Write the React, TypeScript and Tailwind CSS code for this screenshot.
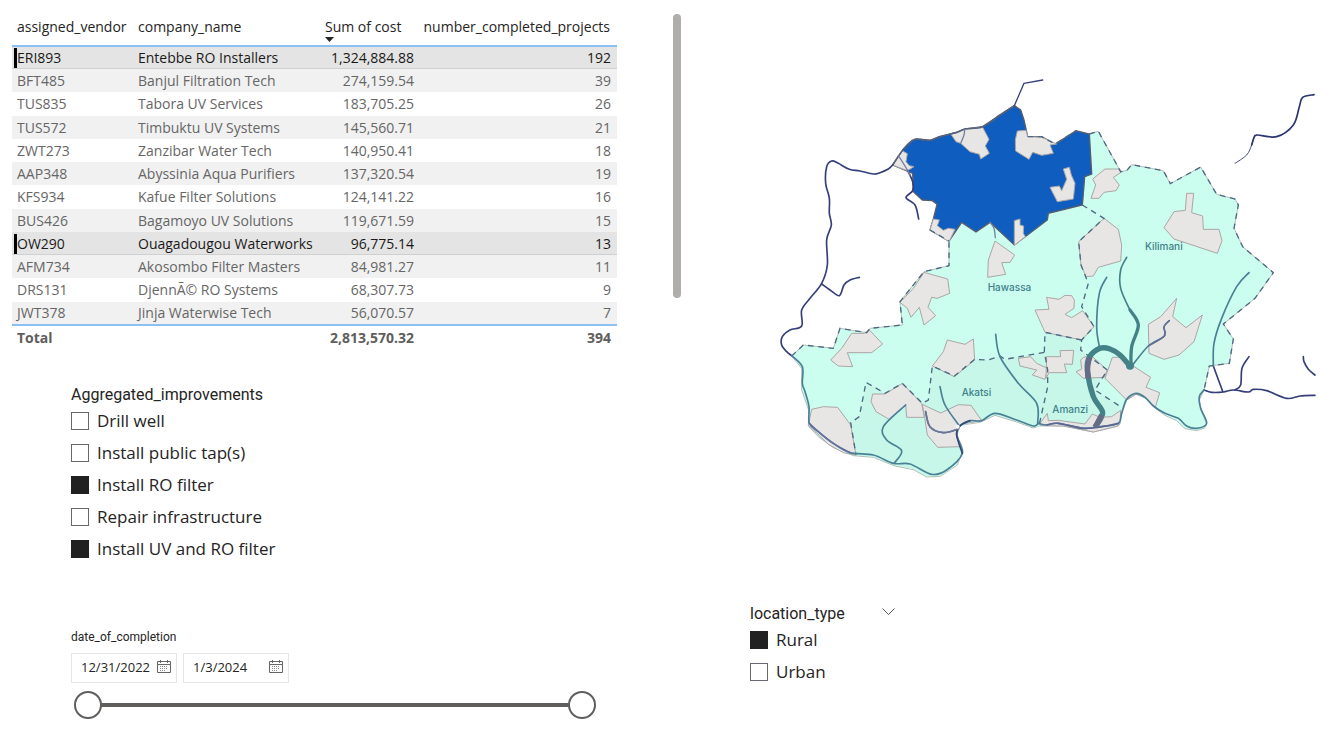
import { useState } from "react";

type Vendor = { id: string; name: string; cost: string; projects: number };

const vendors: Vendor[] = [
  { id: "ERI893", name: "Entebbe RO Installers", cost: "1,324,884.88", projects: 192 },
  { id: "BFT485", name: "Banjul Filtration Tech", cost: "274,159.54", projects: 39 },
  { id: "TUS835", name: "Tabora UV Services", cost: "183,705.25", projects: 26 },
  { id: "TUS572", name: "Timbuktu UV Systems", cost: "145,560.71", projects: 21 },
  { id: "ZWT273", name: "Zanzibar Water Tech", cost: "140,950.41", projects: 18 },
  { id: "AAP348", name: "Abyssinia Aqua Purifiers", cost: "137,320.54", projects: 19 },
  { id: "KFS934", name: "Kafue Filter Solutions", cost: "124,141.22", projects: 16 },
  { id: "BUS426", name: "Bagamoyo UV Solutions", cost: "119,671.59", projects: 15 },
  { id: "OW290", name: "Ouagadougou Waterworks", cost: "96,775.14", projects: 13 },
  { id: "AFM734", name: "Akosombo Filter Masters", cost: "84,981.27", projects: 11 },
  { id: "DRS131", name: "DjennÃ© RO Systems", cost: "68,307.73", projects: 9 },
  { id: "JWT378", name: "Jinja Waterwise Tech", cost: "56,070.57", projects: 7 },
];

const highlighted = ["ERI893", "OW290"];

function VendorTable() {
  return (
    <table className="w-full table-fixed border-collapse text-sm text-[#252423]">
      <colgroup>
        <col className="w-[121px]" />
        <col className="w-[187px]" />
        <col className="w-[100px]" />
        <col />
      </colgroup>
      <thead>
        <tr className="h-8 border-b-2 border-[#8cc0f2] text-left align-top whitespace-nowrap">
          <th className="pt-[3px] pl-[5px] font-normal">assigned_vendor</th>
          <th className="pt-[3px] pl-[5px] font-normal">company_name</th>
          <th className="pt-[3px] pl-[5px] font-normal" aria-sort="descending">
            <button className="block text-left">
              Sum of cost
              <svg viewBox="0 0 9 5" className="h-[5px] w-[9px]" aria-hidden="true">
                <path d="M0 0h9L4.500 5z" fill="#252423" />
              </svg>
            </button>
          </th>
          <th className="pt-[3px] pr-[7px] text-right font-normal">number_completed_projects</th>
        </tr>
      </thead>
      <tbody>
        {vendors.map((v, i) => {
          const on = highlighted.includes(v.id);
          const height = i % 4 === 2 ? "h-6" : "h-[23px]";
          const tone = on
            ? "bg-[#e4e4e4] text-[#1b1a19] shadow-[inset_0_-1px_0_#d0d0d0]"
            : i % 2 === 1
              ? "bg-[#f1f1f1] text-[#666666]"
              : "bg-white text-[#666666]";
          return (
            <tr key={v.id} className={`${height} ${tone} leading-5`}>
              <td className="pl-[2px]">
                <span className={on ? "block border-l-[3px] border-black" : "block pl-[3px]"}>{v.id}</span>
              </td>
              <td className="pl-[5px] whitespace-nowrap">{v.name}</td>
              <td className="pr-[6px] text-right">{v.cost}</td>
              <td className="pr-[6px] text-right">{v.projects}</td>
            </tr>
          );
        })}
      </tbody>
      <tfoot>
        <tr className="h-6 border-t-2 border-[#8cc0f2] font-bold text-[#605e5c]">
          <td className="pl-[5px]">Total</td>
          <td />
          <td className="pr-[6px] text-right">2,813,570.32</td>
          <td className="pr-[6px] text-right">394</td>
        </tr>
      </tfoot>
    </table>
  );
}

function CheckRow({ label, initial }: { label: string; initial: boolean }) {
  const [checked, setChecked] = useState(initial);
  return (
    <label className="flex h-8 items-center gap-2 text-[17px] leading-6 text-[#252423]">
      <input
        type="checkbox"
        checked={checked}
        onChange={() => setChecked(!checked)}
        className="size-[18px] shrink-0 appearance-none border border-[#6b6670] bg-white checked:border-[#212121] checked:bg-[#212121]"
      />
      {label}
    </label>
  );
}

function CalendarIcon() {
  return (
    <svg viewBox="0 0 14 13" className="h-[13px] w-[14px]" fill="none" stroke="#666" aria-hidden="true">
      <path d="M.5 1.500h13v11H.5zM.5 4.500h13M3.500 0v3M10.500 0v3" />
      <path d="M3 6.500h8M3 8.500h8M3 10.500h6" strokeDasharray="1 1" stroke="#888" />
    </svg>
  );
}

function DateBox({ value, label }: { value: string; label: string }) {
  return (
    <div className="flex h-[30px] w-[106px] items-center border border-[#e6e6e6] pr-[5px] pl-[9px]">
      <input aria-label={label} defaultValue={value} className="min-w-0 flex-1 text-[13px] text-[#252423] outline-none" />
      <button className="pb-1" aria-label={`Open calendar for ${label}`}>
        <CalendarIcon />
      </button>
    </div>
  );
}

const thumb =
  "pointer-events-none col-start-1 row-start-1 h-7 w-full appearance-none bg-transparent [&::-webkit-slider-thumb]:pointer-events-auto [&::-webkit-slider-thumb]:size-7 [&::-webkit-slider-thumb]:appearance-none [&::-webkit-slider-thumb]:rounded-full [&::-webkit-slider-thumb]:border-2 [&::-webkit-slider-thumb]:border-solid [&::-webkit-slider-thumb]:border-[#605e5c] [&::-webkit-slider-thumb]:bg-white";

function DateRange() {
  return (
    <div className="ml-[3px] grid items-center">
      <div className="col-start-1 row-start-1 mx-3 h-1 bg-[#605e5c]" />
      <input type="range" aria-label="Start date" min={0} max={368} defaultValue={0} className={thumb} />
      <input type="range" aria-label="End date" min={0} max={368} defaultValue={368} className={thumb} />
    </div>
  );
}

// Turns "x,y x,y ..." into a smooth curve passing through every point.
function curve(points: string): string {
  const p = points.split(" ").map((s) => s.split(",").map(Number));
  let d = `M${p[0][0]} ${p[0][1]}`;
  for (let i = 0; i < p.length - 1; i++) {
    const a = p[Math.max(i - 1, 0)];
    const b = p[i];
    const c = p[i + 1];
    const e = p[Math.min(i + 2, p.length - 1)];
    d += `C${b[0] + (c[0] - a[0]) / 6} ${b[1] + (c[1] - a[1]) / 6} ${c[0] - (e[0] - b[0]) / 6} ${c[1] - (e[1] - b[1]) / 6} ${c[0]} ${c[1]}`;
  }
  return d;
}

const country =
  "958,192 985,184 1052,305 1070,302 1085,284 1180,302 1201,341 1292,291 1340,373 1395,387 1405,405 1392,475 1418,530 1510,608 1455,685 1360,762 1390,807 1378,880 1318,888 1302,960 1288,990 1293,1020 1310,1062 1304,1074 1280,1082 1245,1076 1220,1052 1185,1036 1155,1014 1125,984 1098,973 1070,990 1056,1030 1045,1068 970,1086 880,1068 810,1067 790,1074 740,1056 675,1036 630,1057 570,1066 560,1100 578,1142 562,1185 510,1219 470,1221 430,1199 375,1188 310,1162 250,1157 190,1133 145,1100 115,1068 116,1020 95,960 95,895 65,858 100,825 190,835 210,775 290,788 300,775 397,765 390,695 462,605 537,587 537,513 575,457 660,457 733,500 832,420 937,405 944,320 965,312";

const lowerProvinces =
  "487,888 553,918 614,868 655,870 690,858 705,868 823,847 825,787 935,810 932,840 1012,900 975,960 1055,1012 1045,1066 970,1083 880,1065 790,1071 740,1054 675,1033 630,1055 570,1066 560,1100 577,1142 560,1185 510,1217 470,1218 430,1197 375,1186 310,1160 258,1155 242,1058 268,1040 288,937 345,970 397,940 457,1000 475,990";

const sokoto =
  "733,107 752,120 762,150 773,200 815,200 855,222 872,212 918,182 958,192 965,312 944,320 937,405 835,430 832,450 733,525 660,457 618,486 575,457 537,513 480,480 490,447 501,403 487,392 457,390 430,365 428,310 368,285 400,238 425,213 440,207 480,211 510,200 560,187 585,177 638,170 690,135";

const towns = [
  "368,285 398,243 412,251 408,275 418,287 432,290 412,302",
  "543,193 560,187 585,178 638,172 657,208 646,228 658,250 632,267 628,253 600,245 572,220 558,215",
  "742,183 768,181 773,200 815,202 860,222 840,225 850,250 815,256 788,247 777,268 737,243 736,210",
  "880,297 898,292 904,315 915,340 910,387 862,395 840,352 868,348 875,362 890,328",
  "490,447 508,450 502,467 520,481 535,475 555,478 537,515 480,480",
  "733,452 750,447 750,465 761,468 760,490 766,500 733,526",
  "675,513 734,555 720,577 695,578 707,613 653,622 655,570",
  "462,607 533,627 539,670 502,685 485,682 474,712 497,737 462,765 448,712 423,742 412,715 390,697 430,655",
  "245,790 283,790 298,780 338,822 305,848 232,848 248,890 205,888 182,870 215,835",
  "532,810 585,823 610,807 614,870 553,920 487,888 520,845",
  "125,1018 160,1010 203,1012 242,1065 258,1155 220,1148 175,1123 115,1065",
  "308,972 345,972 397,940 455,1000 463,1042 410,1042 407,1005 357,1048 318,1025 303,995",
  "457,1003 512,1029 565,1004 603,1006 635,1052 575,1062 558,1080 572,1130 503,1132 472,1095 463,1035",
  "1005,297 1048,297 1053,307 1030,322 1048,345 1038,362 1002,367 987,385 963,385 977,345 968,327",
  "1250,370 1271,370 1265,428 1298,438 1300,478 1347,478 1356,512 1342,550 1212,507 1182,473 1212,425 1246,421",
  "1002,445 1045,478 1055,525 1052,573 985,592 970,618 948,620 933,585 926,515",
  "830,682 867,688 885,676 905,677 913,690 912,715 885,733 905,743 938,722 972,770 935,810 825,787 795,720 837,718",
  "745,865 782,860 800,880 833,895 825,928 787,915 800,900 750,888",
  "830,860 872,860 870,842 911,841 907,883 883,882 890,908 837,908 828,925",
  "940,862 965,858 1012,900 1002,922 940,925 918,905 935,897 932,870",
  "1027,862 1050,862 1142,922 1128,952 1169,968 1156,1012 1125,980 1098,972 1070,990 1005,925",
  "1135,763 1172,740 1220,685 1208,740 1248,773 1297,735 1272,815 1227,855 1182,868 1137,850",
  "810,1060 832,1030 835,1052 865,1051 945,1062 967,1032 990,1042 1025,1040 1052,1021 1050,1062 1040,1069 970,1086 880,1068 810,1067",
];

const borders = [
  "958,192 985,184 1052,305 1070,302 1085,284 1180,302 1201,341 1292,291 1340,373 1395,387 1405,405 1392,475 1418,530 1510,608 1455,685 1360,762 1390,807 1378,880 1318,888 1302,960",
  "65,858 100,825 190,835 210,775 290,788 300,775 397,765 390,695 462,605 537,587 537,513",
  "937,405 1002,445 926,515 933,585 955,640 935,710 972,770 935,810 932,840 1012,900 975,960 1055,1012",
  "935,810 825,787 823,845 833,900 833,950 808,1062",
  "823,847 705,868 690,858 655,870 614,868 553,918 487,888 475,990 457,1000 397,940 345,970 288,937 268,1040 242,1058 258,1155",
  "773,200 815,200 855,222 872,212 918,182",
  "480,480 537,513",
];

const navyRivers = [
  "446,447 435,405 408,383 428,362 428,335 412,300",
  "368,285 355,297 330,308 310,312 270,303 238,298 205,280 185,273 170,290 167,340 178,385 178,430 184,465 170,510 172,585 155,640 120,685 95,720 95,768 60,780 37,800 35,825 50,845 65,857",
  "155,642 180,660 208,677 222,645 240,630 268,622",
  "1302,960 1325,967 1360,966 1390,960 1435,966 1450,958 1490,962 1550,985 1590,978 1635,976",
  "1437,860 1416,895 1412,945 1395,960",
  "1358,964 1330,888",
  "1600,860 1602,875 1615,898 1635,915",
];

const shoreRivers = [
  "65,857 97,890 97,940 105,965 117,1010 118,1060 145,1085 190,1120 240,1148 310,1155 370,1180 420,1182 485,1213 530,1200 577,1150 560,1095 570,1068 600,1052 635,1052 675,1030 740,1050 790,1068 805,1060",
  "1302,960 1288,980 1292,1015 1310,1060 1280,1075 1250,1068 1225,1045 1185,1030 1150,1008 1125,982 1098,970 1070,988 1055,1030 1045,1060 995,1070 940,1075 865,1060 830,1065 805,1060",
  "1330,888 1332,820 1355,745 1400,650 1437,608",
  "677,793 690,860 745,940 800,1000 803,1060",
  "510,950 525,1005 568,1067",
  "467,1025 480,1070 520,1088 565,1077",
  "1088,885 1135,828 1183,798 1182,770 1198,752",
  "407,1005 340,1070 350,1110 395,1142 372,1180",
  "988,830 980,770 988,670 1010,622",
];

const townStreams = ["385,257 400,280 412,300 420,315", "572,220 582,195 584,178", "660,457 672,475 676,503"];

function ProvinceMap() {
  return (
    <svg viewBox="0 0 1644 1260" className="block w-full" role="img" aria-label="Map of provinces">
      <polygon points={country} fill="#cbfeee" stroke="#b4bdba" strokeWidth="3" />
      <polygon points={lowerProvinces} fill="#c6f7e9" />
      <polygon points={sokoto} fill="#105dc0" stroke="#555d6c" strokeWidth="4" />
      {towns.map((t) => (
        <polygon key={t} points={t} fill="#e8e6e5" stroke="#aaa6a5" strokeWidth="3" strokeLinejoin="round" />
      ))}
      <g fill="none" stroke="#4d6880" strokeWidth="4" strokeDasharray="17 14">
        {borders.map((b) => (
          <polyline key={b} points={b} />
        ))}
      </g>
      <g fill="none" strokeLinecap="round" strokeLinejoin="round">
        <path d={curve("368,285 400,238 425,213 440,207 480,211 510,200 560,187 585,177 638,170 690,135 733,107")} stroke="#55617b" strokeWidth="5" />
        <path d="M733 107L762 40L818 30" stroke="#36407a" strokeWidth="4" />
        <g stroke="#343e7a" strokeWidth="5">
          {navyRivers.map((r) => (
            <path key={r} d={curve(r)} />
          ))}
        </g>
        <path d={curve("1395,280 1430,255 1445,225 1452,203 1460,195")} stroke="#4a4f84" strokeWidth="3" />
        <path d={curve("1445,225 1452,203 1462,195 1520,200 1570,165 1588,110 1598,82 1632,74")} stroke="#2a3470" strokeWidth="5" />
        <g stroke="#4a8096" strokeWidth="5">
          {shoreRivers.map((r) => (
            <path key={r} d={curve(r)} />
          ))}
        </g>
        <path d={curve("118,1060 145,1085 190,1120 240,1148")} stroke="#6670a0" strokeWidth="5" />
        <path d={curve("577,1150 560,1095 570,1068 600,1052")} stroke="#354777" strokeWidth="5" />
        <path d={curve("467,1025 480,1070 520,1088 565,1077")} stroke="#6b7398" strokeWidth="5" />
        <path d={curve("1135,828 1183,798 1182,770 1198,752")} stroke="#666e92" strokeWidth="4" />
        <path d={curve("1045,1060 995,1070 940,1075 865,1060 830,1065")} stroke="#5d6592" strokeWidth="5" />
        <g stroke="#7881a5" strokeWidth="4">
          {townStreams.map((r) => (
            <path key={r} d={curve(r)} />
          ))}
        </g>
        <g stroke="#458287">
          <path d={curve("1083,893 1085,830 1105,765 1080,720 1052,655 1052,600 1070,562")} strokeWidth="5" />
          <path d={curve("1083,893 1085,830 1105,765 1080,720")} strokeWidth="10" />
          <path d={curve("975,1072 998,1028 970,980 952,900 958,862 990,835 1020,837 1050,855 1082,891")} strokeWidth="16" strokeLinecap="butt" />
        </g>
        <g stroke="#686b86" strokeWidth="16" strokeLinecap="butt">
          <path d="M975 1072L995 1035" />
          <path d="M954 924C951 900 952 880 960 861" />
        </g>
        <circle cx="1080" cy="887" r="12" fill="#458287" />
        <circle cx="563" cy="1070" r="6" fill="#fff" />
      </g>
      <g className="font-['Inter',sans-serif] text-[30px] font-medium" fill="#3f808a">
        <text x="653" y="663">Hawassa</text>
        <text x="1125" y="539">Kilimani</text>
        <text x="575" y="977">Akatsi</text>
        <text x="847" y="1028">Amanzi</text>
      </g>
    </svg>
  );
}

const slicerTitle = "font-['Roboto',sans-serif] text-base leading-5 text-[#252423]";

export default function App() {
  return (
    <main className="flex min-h-screen bg-white font-['Open_Sans','Noto_Sans',sans-serif]">
      <div className="w-[681px] shrink-0">
        <div className="flex items-start justify-between pt-[14px] pl-3">
          <div className="w-[605px]">
            <VendorTable />
          </div>
          <div className="h-[284px] w-2 rounded-full bg-[#b0aead]" />
        </div>
        <section className="pt-9 pl-[71px]" role="group" aria-labelledby="improvements">
          <h2 id="improvements" className={slicerTitle}>Aggregated_improvements</h2>
          <CheckRow label="Drill well" initial={false} />
          <CheckRow label="Install public tap(s)" initial={false} />
          <CheckRow label="Install RO filter" initial={true} />
          <CheckRow label="Repair infrastructure" initial={false} />
          <CheckRow label="Install UV and RO filter" initial={true} />
        </section>
        <section className="w-[596px] pt-16 pl-[71px]">
          <h2 className="font-['Roboto',sans-serif] text-xs leading-4 text-[#252423]">date_of_completion</h2>
          <div className="flex gap-[6px] py-2">
            <DateBox value="12/31/2022" label="Start date" />
            <DateBox value="1/3/2024" label="End date" />
          </div>
          <DateRange />
        </section>
      </div>
      <div className="min-w-0 flex-1 pt-[70px] pr-5">
        <div className="pl-[89px]">
          <ProvinceMap />
        </div>
        <section className="pt-28 pl-[69px]" role="group" aria-labelledby="location">
          <div className="flex w-[145px] items-center justify-between pt-[2px]">
            <h2 id="location" className={slicerTitle}>location_type</h2>
            <button className="pb-1" aria-label="Expand location_type">
              <svg viewBox="0 0 13 8" className="h-2 w-[13px]" fill="none" stroke="#555" aria-hidden="true">
                <path d="M.5 .5l6 6 6-6" />
              </svg>
            </button>
          </div>
          <CheckRow label="Rural" initial={true} />
          <CheckRow label="Urban" initial={false} />
        </section>
      </div>
    </main>
  );
}
